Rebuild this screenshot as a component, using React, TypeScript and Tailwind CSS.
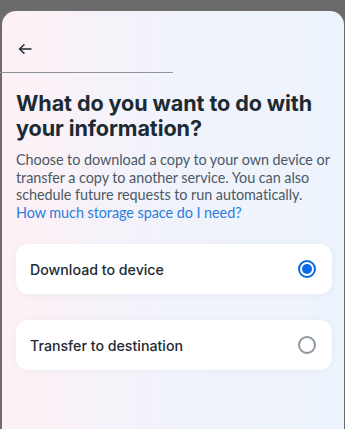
import { useState } from "react";

const options = [
  { id: "download", label: "Download to device" },
  { id: "transfer", label: "Transfer to destination" },
];

export default function App() {
  const [selected, setSelected] = useState("download");

  return (
    <div className="h-[429px] w-[345px] overflow-hidden bg-[#6b6b6b] pt-[11px] pl-[2px] pr-[1px]" style={{ fontFamily: "Inter, 'Noto Sans', sans-serif" }}>
      <div className="h-full rounded-t-[14px] bg-gradient-to-r from-[#fdf1f5] via-[#f1f3fc] to-[#edf3fc]">
        {/* Header */}
        <div className="h-[61px] pt-[28px] pl-[13px]">
          <button className="flex h-5 w-5 items-center justify-center text-[#1c2b33]" aria-label="Back">
            <svg width="16" height="16" viewBox="0 0 24 24" fill="none" stroke="currentColor" strokeWidth="2.2" strokeLinecap="round" strokeLinejoin="round">
              <path d="M21 12H4" />
              <path d="M10.5 5.5L4 12l6.5 6.5" />
            </svg>
          </button>
        </div>
        <div className="-ml-[2px] h-px w-[173px] bg-[#8d9399]" />

        {/* Content */}
        <div className="px-[14px] pt-[18px]">
          <h1 className="text-[21.6px] leading-[25px] font-bold tracking-[-0.1px] text-[#1c2b33]">
            What do you want to do with your information?
          </h1>
          <p className="mt-[10px] whitespace-nowrap text-[14.4px] leading-[17.6px] tracking-[-0.05px] text-[#4b5a66]" style={{ fontFamily: "Lato, 'Noto Sans', sans-serif" }}>
            Choose to download a copy to your own device or<br />
            transfer a copy to another service. You can also<br />
            schedule future requests to run automatically.
            <a className="block text-[#2a7de1]" href="#">How much storage space do I need?</a>
          </p>

          <div className="mt-[23px] flex flex-col gap-[26px] pr-[1px]">
            {options.map((o) => {
              const on = selected === o.id;
              return (
                <button
                  key={o.id}
                  onClick={() => setSelected(o.id)}
                  className="flex h-[50px] w-[316px] items-center justify-between rounded-[12px] bg-white pl-[14px] pr-[16px] text-left shadow-[0_1px_6px_rgba(30,60,120,0.05)]"
                >
                  <span className="text-[14.2px] font-medium text-[#1c2b33]">{o.label}</span>
                  {on ? (
                    <span className="flex h-[18px] w-[18px] items-center justify-center rounded-full border-2 border-[#0a6ae6]">
                      <span className="h-[10px] w-[10px] rounded-full bg-[#0a6ae6]" />
                    </span>
                  ) : (
                    <span className="h-[18px] w-[18px] rounded-full border-2 border-[#8c98a3]" />
                  )}
                </button>
              );
            })}
          </div>
        </div>
      </div>
    </div>
  );
}
